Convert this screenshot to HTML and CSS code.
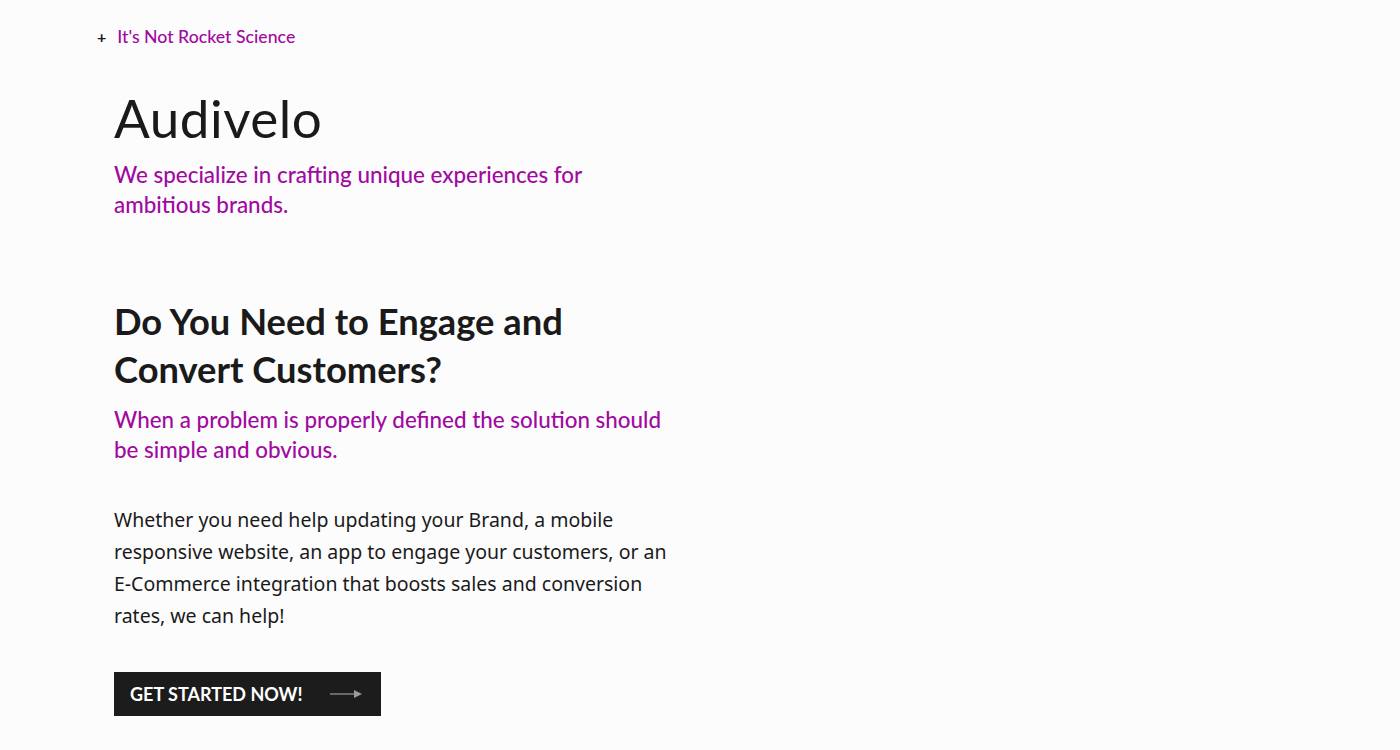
FILE: index.html
```html
<!DOCTYPE html>
<html lang="en">
<head>
    <meta charset="UTF-8">
    <meta name="viewport" content="width=device-width, initial-scale=1.0">
    <title>Audivelo</title>
    <link rel="stylesheet" href="styles.css">
</head>
<body>
    <header class="topBar">
        <span class="plus">+</span>
        <a href="#" class="tagline">It's Not Rocket Science</a>
    </header>
    <main class="hero">
        <h1 class="brand">Audivelo</h1>
        <p class="lead">We specialize in crafting unique experiences for<br>ambitious brands.</p>

        <h2 class="question">Do You Need to Engage and<br>Convert Customers?</h2>
        <p class="lead">When a problem is properly defined the solution should<br>be simple and obvious.</p>

        <p class="text">Whether you need help updating your Brand, a mobile responsive website, an app to engage your customers, or an E-Commerce integration that boosts sales and conversion rates, we can help!</p>

        <a href="#" class="cta">
            GET STARTED NOW!
            <svg width="32" height="10" viewBox="0 0 32 10">
                <line x1="0" y1="5" x2="26" y2="5" stroke="#9a9a9a" stroke-width="1.2"/>
                <polygon points="24,1 32,5 24,9" fill="#9a9a9a"/>
            </svg>
        </a>
    </main>
</body>
</html>
```

FILE: styles.css
```css
body {
    margin: 0;
    background-color: #fcfcfd;
    color: #1a1a1a;
    font-family: "Lato", "Noto Sans", sans-serif;
}

.topBar {
    display: flex;
    align-items: center;
    gap: 11px;
    padding: 24px 0 0 97px;
    height: 24px;
}

.plus {
    font-size: 16px;
    font-weight: 700;
    color: #1a1a1a;
}

.tagline {
    font-size: 17.7px;
    font-weight: 500;
    color: #a00aa0;
    text-decoration: none;
}

.hero {
    padding-left: 114px;
    width: 580px;
}

.brand {
    font-size: 53px;
    font-weight: 400;
    margin: 38px 0 0 0;
    line-height: 64px;
    letter-spacing: 0.5px;
}

.lead {
    color: #a00aa0;
    font-size: 22.4px;
    font-weight: 500;
    line-height: 30px;
    margin: 0;
}

.brand + .lead {
    margin-top: 10px;
}

.question {
    font-size: 36.3px;
    font-weight: 700;
    line-height: 48px;
    margin: 77px 0 12px 0;
}

.text {
    font-family: "Noto Sans", sans-serif;
    font-size: 19.5px;
    line-height: 32px;
    width: 560px;
    margin: 39px 0 40px 0;
}

.cta {
    display: inline-flex;
    align-items: center;
    gap: 27px;
    background-color: #1c1c1c;
    color: white;
    font-size: 18px;
    font-weight: 700;
    text-decoration: none;
    padding: 0 19px 0 16px;
    height: 44px;
}
```
